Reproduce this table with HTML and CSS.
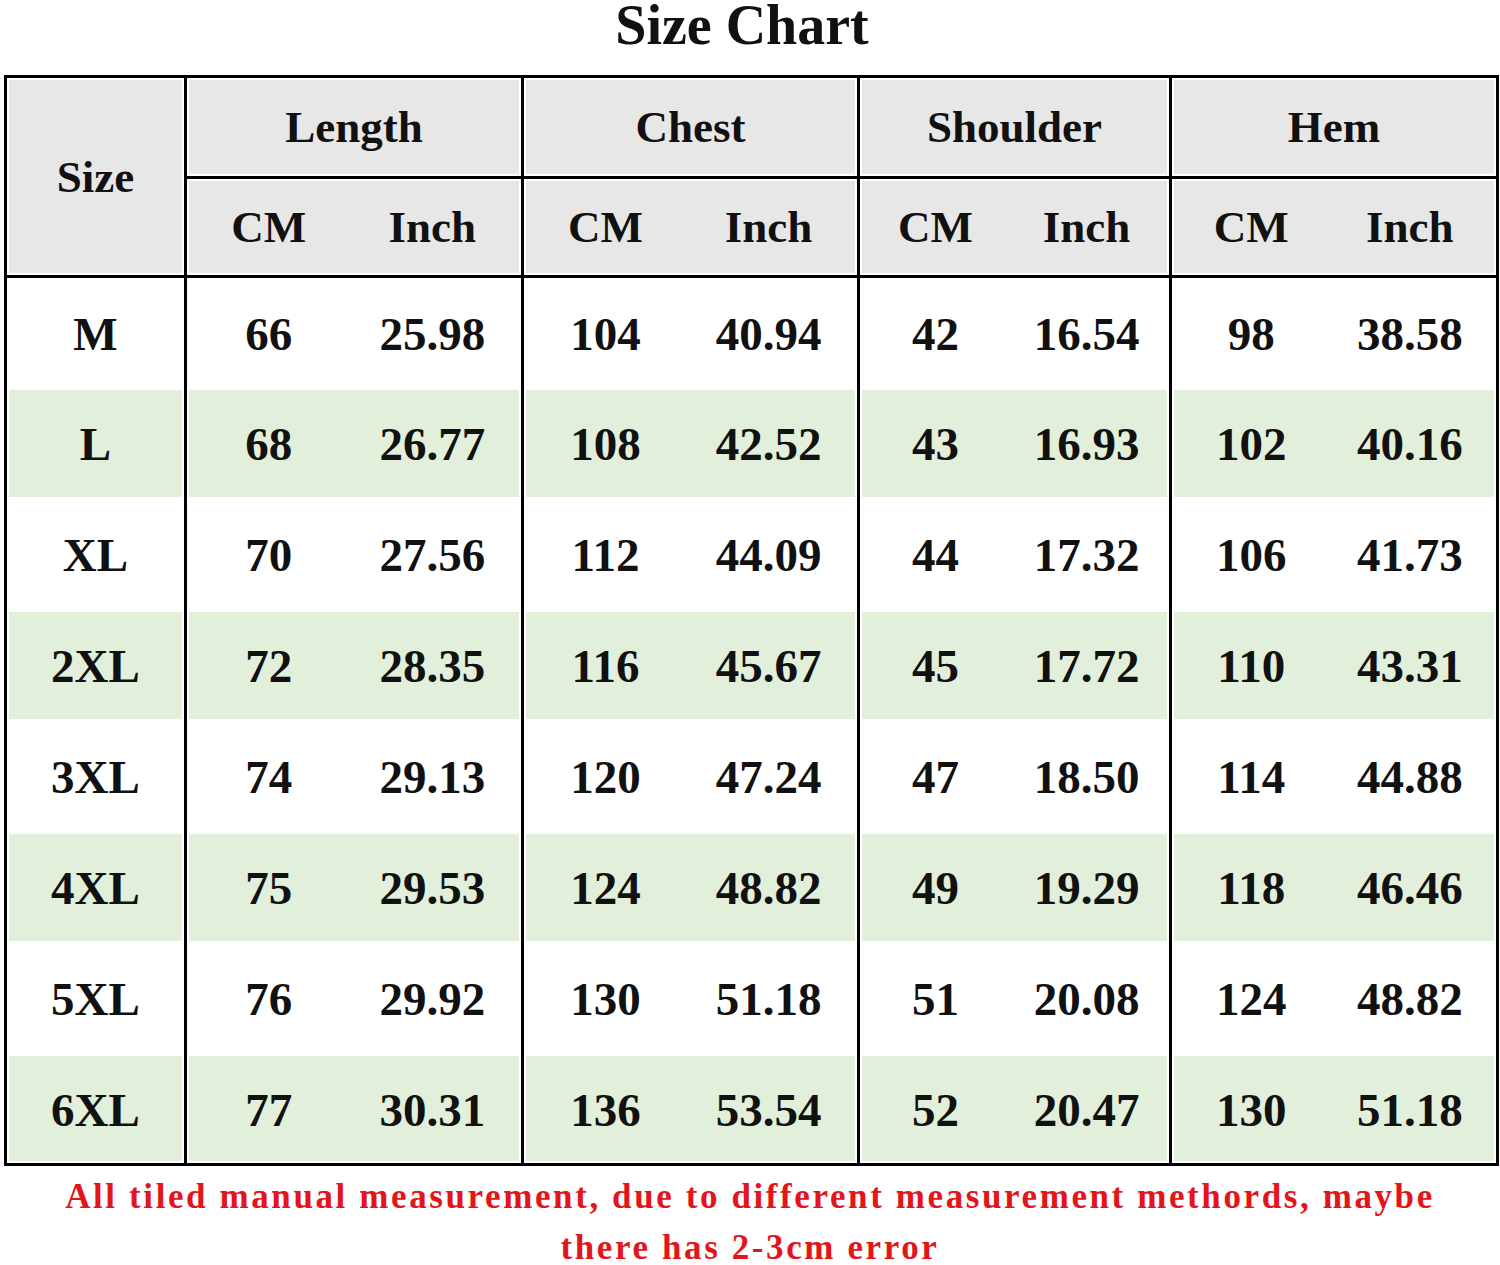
FILE: index.html
```html
<!DOCTYPE html>
<html>
<head>
<meta charset="utf-8">
<title>Size Chart</title>
<link rel="stylesheet" href="styles.css">
</head>
<body>
<h1 class="title">Size Chart</h1>
<table class="chart">
  <colgroup>
    <col class="c-size">
    <col class="c-length">
    <col class="c-chest">
    <col class="c-shoulder">
    <col class="c-hem">
  </colgroup>
  <thead>
    <tr class="head-top">
      <th rowspan="2" class="size-head">Size</th>
      <th>Length</th>
      <th>Chest</th>
      <th>Shoulder</th>
      <th>Hem</th>
    </tr>
    <tr class="head-sub">
      <th><div class="pair"><span>CM</span><span>Inch</span></div></th>
      <th><div class="pair"><span>CM</span><span>Inch</span></div></th>
      <th><div class="pair"><span>CM</span><span>Inch</span></div></th>
      <th><div class="pair"><span>CM</span><span>Inch</span></div></th>
    </tr>
  </thead>
  <tbody>
    <tr class="row">
      <td class="size">M</td>
      <td><div class="pair"><span>66</span><span>25.98</span></div></td>
      <td><div class="pair"><span>104</span><span>40.94</span></div></td>
      <td><div class="pair"><span>42</span><span>16.54</span></div></td>
      <td><div class="pair"><span>98</span><span>38.58</span></div></td>
    </tr>
    <tr class="row alt">
      <td class="size">L</td>
      <td><div class="pair"><span>68</span><span>26.77</span></div></td>
      <td><div class="pair"><span>108</span><span>42.52</span></div></td>
      <td><div class="pair"><span>43</span><span>16.93</span></div></td>
      <td><div class="pair"><span>102</span><span>40.16</span></div></td>
    </tr>
    <tr class="row">
      <td class="size">XL</td>
      <td><div class="pair"><span>70</span><span>27.56</span></div></td>
      <td><div class="pair"><span>112</span><span>44.09</span></div></td>
      <td><div class="pair"><span>44</span><span>17.32</span></div></td>
      <td><div class="pair"><span>106</span><span>41.73</span></div></td>
    </tr>
    <tr class="row alt">
      <td class="size">2XL</td>
      <td><div class="pair"><span>72</span><span>28.35</span></div></td>
      <td><div class="pair"><span>116</span><span>45.67</span></div></td>
      <td><div class="pair"><span>45</span><span>17.72</span></div></td>
      <td><div class="pair"><span>110</span><span>43.31</span></div></td>
    </tr>
    <tr class="row">
      <td class="size">3XL</td>
      <td><div class="pair"><span>74</span><span>29.13</span></div></td>
      <td><div class="pair"><span>120</span><span>47.24</span></div></td>
      <td><div class="pair"><span>47</span><span>18.50</span></div></td>
      <td><div class="pair"><span>114</span><span>44.88</span></div></td>
    </tr>
    <tr class="row alt">
      <td class="size">4XL</td>
      <td><div class="pair"><span>75</span><span>29.53</span></div></td>
      <td><div class="pair"><span>124</span><span>48.82</span></div></td>
      <td><div class="pair"><span>49</span><span>19.29</span></div></td>
      <td><div class="pair"><span>118</span><span>46.46</span></div></td>
    </tr>
    <tr class="row">
      <td class="size">5XL</td>
      <td><div class="pair"><span>76</span><span>29.92</span></div></td>
      <td><div class="pair"><span>130</span><span>51.18</span></div></td>
      <td><div class="pair"><span>51</span><span>20.08</span></div></td>
      <td><div class="pair"><span>124</span><span>48.82</span></div></td>
    </tr>
    <tr class="row alt">
      <td class="size">6XL</td>
      <td><div class="pair"><span>77</span><span>30.31</span></div></td>
      <td><div class="pair"><span>136</span><span>53.54</span></div></td>
      <td><div class="pair"><span>52</span><span>20.47</span></div></td>
      <td><div class="pair"><span>130</span><span>51.18</span></div></td>
    </tr>
  </tbody>
</table>
<p class="note">All tiled manual measurement, due to different measurement methords, maybe<br>there has 2-3cm error</p>
</body>
</html>
```

FILE: styles.css
```css
html, body {
  margin: 0;
  padding: 0;
  background: #fff;
}

body {
  font-family: "Liberation Serif", "Times New Roman", serif;
  font-weight: bold;
  color: #111;
  width: 1500px;
}

.title {
  margin: 0;
  padding-right: 16px;
  padding-top: 2px;
  font-size: 56px;
  line-height: 46px;
  height: 46px;
  text-align: center;
  font-weight: bold;
  color: #111;
  margin-bottom: 27px;
}

.chart {
  border-collapse: collapse;
  margin-left: 4px;
  width: 1492px;
  table-layout: fixed;
  border: 3px solid #000;
}

.c-size { width: 180px; }
.c-length { width: 337px; }
.c-chest { width: 336px; }
.c-shoulder { width: 312px; }
.c-hem { width: 327px; }

.chart th,
.chart td {
  padding: 0;
  border-left: 3px solid #000;
  text-align: center;
  vertical-align: middle;
  font-weight: bold;
}

.chart thead th {
  background: #e7e7e7;
  box-shadow: inset 0 0 0 2px #fff;
  font-size: 45px;
  color: #111;
}

.head-top th {
  border-bottom: 3px solid #000;
}

.head-top {
  height: 101px;
}

.head-sub {
  height: 99px;
}

.head-sub th {
  border-bottom: 3px solid #000;
  font-size: 46px;
}

.size-head {
  font-size: 45px;
}

.row {
  height: 111.5px;
}

.row.alt {
  height: 110.5px;
}

.row td {
  font-size: 47px;
  background: #fff;
  color: #111;
  padding-top: 2px;
}

.row.alt td {
  background: #e2efda;
  box-shadow: inset 0 0 0 2px #fff;
}

.pair {
  display: flex;
  padding-right: 4px;
}

.pair span {
  flex: 1;
  text-align: center;
}

.pair span + span {
  padding-right: 3px;
}

.note {
  margin: 5px 0 0;
  text-align: center;
  color: #e3151b;
  font-size: 35px;
  line-height: 51px;
  letter-spacing: 2.6px;
  font-weight: bold;
}
```
